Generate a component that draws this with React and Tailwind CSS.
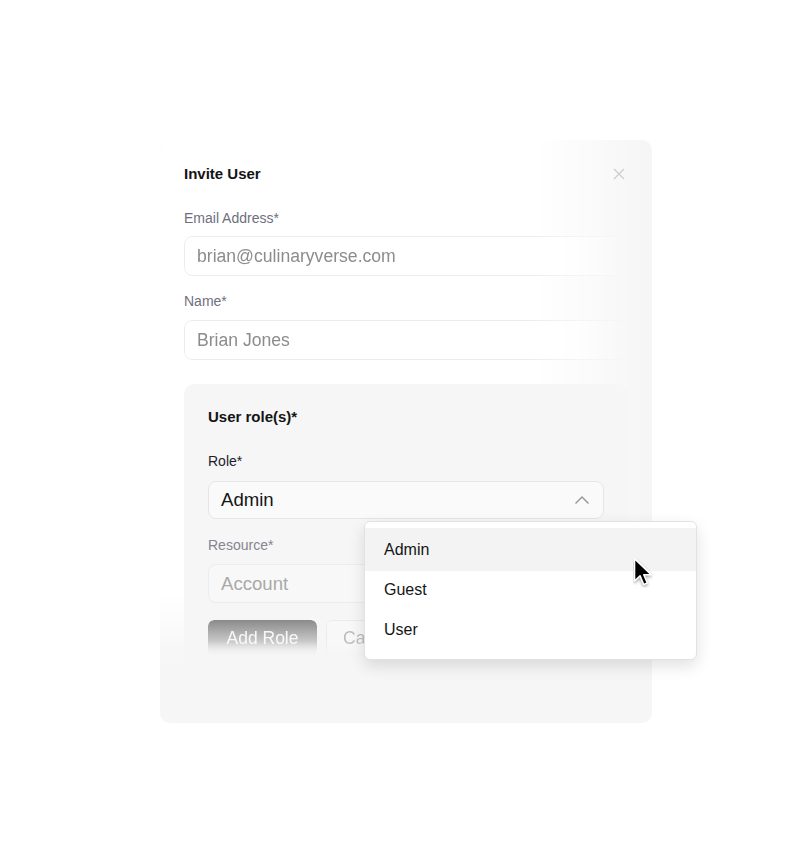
import React from "react";

function Cursor() {
  return (
    <svg width="20" height="31" viewBox="0 0 13 20" className="absolute left-[473px] top-[417px]">
      <path
        d="M1 1 L1 15.5 L4.6 12.2 L7 17.8 L9.3 16.8 L7 11.4 L11.8 11.4 Z"
        fill="#000"
        stroke="#fff"
        strokeWidth="1"
        strokeLinejoin="round"
        style={{ filter: "drop-shadow(0px 1px 1px rgba(0,0,0,0.35))" }}
      />
    </svg>
  );
}

export default function App() {
  return (
    <div
      className="w-[812px] h-[864px] bg-white pt-[140px] pl-[160px]"
      style={{ fontFamily: "'Liberation Sans', Arial, sans-serif" }}
    >
      <div className="relative w-[492px] h-[583px] rounded-[10px] bg-[#f6f6f6]">
        {/* white glow decoration */}
        <div className="absolute inset-0 rounded-[10px] bg-white pointer-events-none [mask-image:linear-gradient(to_right,black_75%,transparent_100%),linear-gradient(to_bottom,black_77%,transparent_90%)] [mask-composite:intersect]" />

        <div className="relative flex flex-col pt-6 px-6 pb-6 h-full">
          <div className="flex items-center justify-between h-5">
            <span className="text-[15px] leading-5 font-bold text-[#141414]">Invite User</span>
            <svg width="12" height="12" viewBox="0 0 12 12" className="mr-[3px]">
              <path d="M1 1 L11 11 M11 1 L1 11" stroke="#cdcdcd" strokeWidth="1.2" />
            </svg>
          </div>

          <span className="mt-6 text-[14px] leading-5 text-[#6f6f7d]">Email Address*</span>
          <div className="mt-[8px] h-10 rounded-lg border border-[#ececec] bg-white flex items-center px-3 [mask-image:linear-gradient(to_right,black_78%,transparent_100%)]">
            <span className="text-[17.6px] text-[#8c8c8c]">brian@culinaryverse.com</span>
          </div>

          <span className="mt-[15px] text-[14px] leading-5 text-[#6f6f7d]">Name*</span>
          <div className="mt-[9px] h-10 rounded-lg border border-[#ececec] bg-white flex items-center px-3 [mask-image:linear-gradient(to_right,black_78%,transparent_100%)]">
            <span className="text-[17.6px] text-[#8c8c8c]">Brian Jones</span>
          </div>

          <div className="mt-6 flex-1 rounded-[10px] bg-[#f6f6f6] pt-[23px] px-6 flex flex-col">
            <span className="text-[15px] leading-5 font-bold text-[#141414]">User role(s)*</span>
            <span className="mt-6 text-[14px] leading-5 font-medium text-[#1c1c2c]">Role*</span>
            <div className="mt-[10px] h-[38px] rounded-lg border border-[#e6e6e6] bg-[#fafafa] flex items-center justify-between pl-3 pr-[13px]">
              <span className="text-[18.6px] text-[#151515]">Admin</span>
              <svg width="16" height="10" viewBox="0 0 16 10">
                <path d="M1.5 8.5 L8 2 L14.5 8.5" fill="none" stroke="#9a9a9a" strokeWidth="1.5" />
              </svg>
            </div>
            <span className="mt-4 text-[14px] leading-5 font-medium text-[#85858f]">Resource*</span>
            <div className="mt-[9px] h-[39px] rounded-lg border border-[#ececec] bg-[#f8f8f8] flex items-center px-3">
              <span className="text-[18.6px] text-[#a9a9a9]">Account</span>
            </div>
            <div className="mt-[17px] flex gap-[9px]">
              <div className="w-[109px] h-9 rounded-md bg-[linear-gradient(to_bottom,#8a8a8a,#d9d9d9_75%,#f0f0f0)] flex items-center justify-center [mask-image:linear-gradient(to_bottom,black_60%,transparent_100%)]">
                <span className="text-[17.5px] text-white/90">Add Role</span>
              </div>
              <div className="w-[100px] h-9 rounded-md border border-[#ebebeb] bg-[#f8f8f8] flex items-center pl-4 [mask-image:linear-gradient(to_bottom,black_60%,transparent_100%)]">
                <span className="text-[17.5px] text-[#bdbdbd]">Cancel</span>
              </div>
            </div>
          </div>
        </div>

        {/* dropdown */}
        <div className="absolute left-[204px] top-[381px] w-[333px] h-[139px] rounded-md bg-white border border-[#e2e2e2] shadow-[0_6px_16px_rgba(0,0,0,0.12)] pt-[6px] flex flex-col">
          <div className="h-[43px] bg-[#f3f3f3] flex items-center px-[19px] text-[16px] text-[#151515]">Admin</div>
          <div className="h-[37px] flex items-center px-[19px] text-[16px] text-[#151515]">Guest</div>
          <div className="h-[43px] flex items-center px-[19px] text-[16px] text-[#151515]">User</div>
        </div>
        <Cursor />
      </div>
    </div>
  );
}
